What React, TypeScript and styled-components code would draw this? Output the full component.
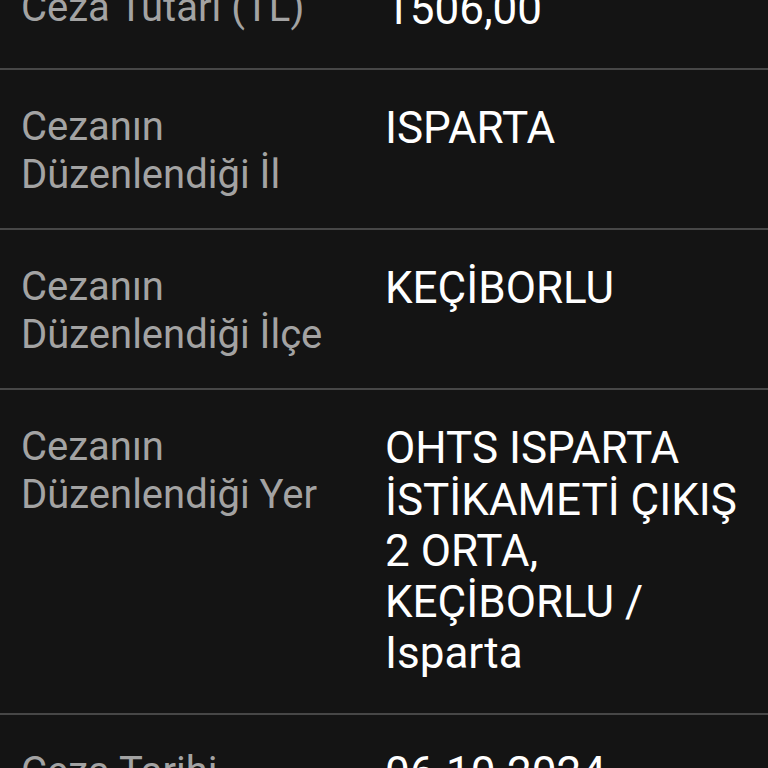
import React from 'react';
import styled, { createGlobalStyle } from 'styled-components';

const GlobalStyle = createGlobalStyle`
  html, body {
    margin: 0;
    padding: 0;
    background: #141414;
    overflow: hidden;
  }
  body {
    font-family: Roboto, "Noto Sans", "Liberation Sans", sans-serif;
  }
`;

const Screen = styled.div`
  width: 768px;
  height: 768px;
  overflow: hidden;
  background: #141414;
`;

// list is scrolled, first row partly hidden
const List = styled.div<{ offset: number }>`
  display: flex;
  flex-direction: column;
  margin-top: ${(p) => -p.offset}px;
`;

const Row = styled.div`
  display: grid;
  grid-template-columns: 364px 1fr;
  align-items: start;
  padding: 33px 20px 33px 21px;
  border-bottom: 2px solid #474747;
`;

const Label = styled.div`
  color: #a3a3a3;
  font-size: 40px;
  line-height: 48px;
  font-weight: 400;
  margin-bottom: -4px;
`;

const Value = styled.div`
  color: #ffffff;
  font-size: 44px;
  line-height: 51.25px;
  font-weight: 400;
`;

const rows = [
  { label: 'Ceza Tutarı (TL)', value: '1506,00' },
  { label: 'Cezanın Düzenlendiği İl', value: 'ISPARTA' },
  { label: 'Cezanın Düzenlendiği İlçe', value: 'KEÇİBORLU' },
  {
    label: 'Cezanın Düzenlendiği Yer',
    value: 'OHTS ISPARTA İSTİKAMETİ ÇIKIŞ 2 ORTA, KEÇİBORLU / Isparta',
  },
  { label: 'Ceza Tarihi', value: '06.10.2024' },
];

const App = () => {
  return (
    <Screen>
      <GlobalStyle />
      <List offset={49}>
        {rows.map((r) => (
          <Row key={r.label}>
            <Label>{r.label}</Label>
            <Value>{r.value}</Value>
          </Row>
        ))}
      </List>
    </Screen>
  );
};

export default App;
